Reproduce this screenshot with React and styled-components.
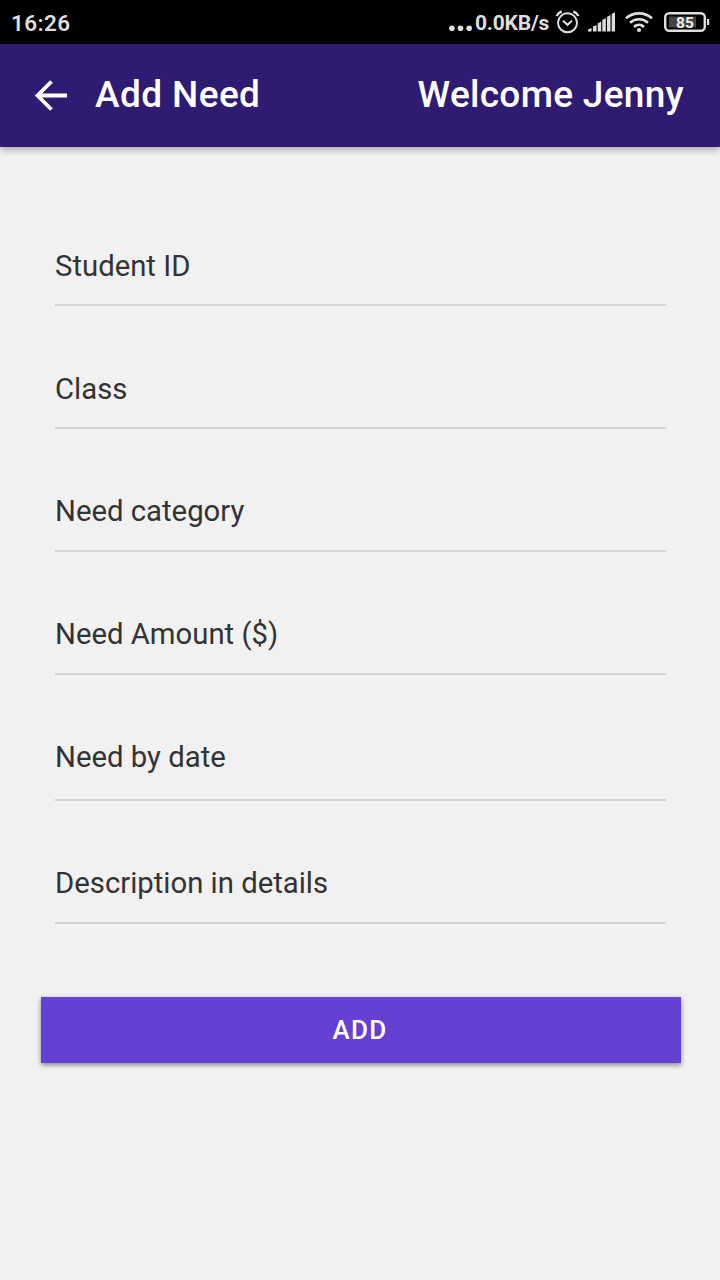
import React from 'react';
import styled, { createGlobalStyle } from 'styled-components';

const GlobalStyle = createGlobalStyle`
  * {
    box-sizing: border-box;
  }
  body {
    margin: 0;
    background: #f1f1f1;
    font-family: Roboto, "Liberation Sans", sans-serif;
  }
`;

const Screen = styled.div`
  width: 720px;
  height: 1280px;
  display: flex;
  flex-direction: column;
  overflow: hidden;
  background: #f1f1f1;
`;

const StatusBar = styled.div`
  height: 44px;
  flex-shrink: 0;
  display: flex;
  justify-content: space-between;
  align-items: center;
  padding: 0 10px 0 11px;
  background: #000;
  color: #dedede;
`;

const Clock = styled.span`
  font-size: 22.5px;
  line-height: 26px;
  font-weight: 600;
  letter-spacing: 0.4px;
  padding-top: 1px;
`;

const StatusIcons = styled.div`
  display: flex;
  align-items: center;
  height: 44px;
`;

const Dots = styled.svg`
  margin-right: 2px;
`;

const Speed = styled.span`
  font-size: 21px;
  line-height: 26px;
  font-weight: 700;
  letter-spacing: -0.2px;
  width: 80px;
  padding-top: 2px;
  white-space: nowrap;
`;

const Spacer = styled.span`
  width: ${(props) => props.$width};
`;

const Header = styled.header`
  height: 103px;
  flex-shrink: 0;
  display: flex;
  align-items: center;
  padding: 0 36px 2px 31px;
  background: #2f1c72;
  color: #fff;
  box-shadow: 0 3px 7px rgba(0, 0, 0, 0.3);
`;

const BackButton = styled.button`
  display: flex;
  border: none;
  padding: 0;
  margin-right: 24px;
  background: none;
  color: inherit;
`;

const Title = styled.h1`
  margin: 0;
  font-size: 37px;
  line-height: 44px;
  font-weight: 500;
  letter-spacing: ${(props) => props.$spacing || '0'};
  white-space: nowrap;
`;

const Welcome = styled(Title).attrs({ as: 'span' })`
  margin-left: auto;
`;

const Form = styled.form`
  display: flex;
  flex-direction: column;
  padding: 36px 39px 0 41px;
`;

const Field = styled.label`
  display: flex;
  align-items: flex-end;
  height: ${(props) => (props.$tall ? '126px' : '123px')};
  margin: 0 15px 0 14px;
  padding-bottom: ${(props) => props.$gap || '20px'};
  border-bottom: 2px solid #d3d3d3;
  color: #333;
  font-size: 29.3px;
  line-height: 38px;
`;

const AddButton = styled.button`
  height: 66px;
  margin-top: 73px;
  padding: 0 2px 0 0;
  border: none;
  background: #6540d3;
  color: #fff;
  font-family: inherit;
  font-size: 26px;
  font-weight: 500;
  letter-spacing: 1.3px;
  box-shadow: 0 2px 5px rgba(0, 0, 0, 0.45);
`;

const fields = [
  { label: 'Student ID', gap: '19px' },
  { label: 'Class', gap: '19px' },
  { label: 'Need category' },
  { label: 'Need Amount ($)' },
  { label: 'Need by date', tall: true, gap: '23px' },
  { label: 'Description in details' },
];

const AlarmIcon = () => (
  <svg width="26" height="44" viewBox="0 0 26 44" fill="none" stroke="#dedede" strokeWidth="2">
    <circle cx="12.5" cy="22.8" r="9.5" />
    <path d="M8 20.8l4.5 4 4.5-4" />
    <path d="M1.5 16c1-2 2.7-3.6 5.2-4.5M23.5 16c-1-2-2.700-3.600-5.200-4.500" strokeWidth="2.4" />
  </svg>
);

const SignalIcon = () => (
  <svg width="28" height="44" viewBox="0 0 28 44" fill="#dedede">
    <path d="M0 31.5v-2l3.500-1.500v3.500z" />
    <path d="M5 31.500v-5l3.500-1.500v6.500z" />
    <path d="M9.700 31.500v-8l3.500-2v10z" />
    <path d="M14.300 31.500v-11.500l3.500-2v13.500z" />
    <path d="M19 31.500v-14.500l3.500-2v16.500z" />
    <path d="M23.700 31.500v-17.500l3.300-1.800v19.300z" />
  </svg>
);

const WifiIcon = () => (
  <svg width="28" height="44" viewBox="0 0 28 44" fill="none" stroke="#dedede" strokeWidth="2.7">
    <path d="M1 18.3c7.500-6.500 18.500-6.500 26 0" />
    <path d="M5 22.8c5.200-4.700 12.800-4.700 18 0" />
    <path d="M9 27c3-2.800 7-2.800 10 0" />
    <circle cx="14" cy="30" r="2.1" fill="#dedede" stroke="none" />
  </svg>
);

const BatteryIcon = () => (
  <svg width="46" height="44" viewBox="0 0 46 44">
    <rect x="1.2" y="13.2" width="39.6" height="17.6" rx="4" fill="none" stroke="#dedede" strokeWidth="2.4" />
    <rect x="5" y="16.5" width="27" height="11" fill="#444" />
    <rect x="43" y="19" width="2.2" height="6" fill="#dedede" />
    <text x="21" y="28" textAnchor="middle" fontSize="15.5" fontWeight="700" fill="#eee">85</text>
  </svg>
);

const BackArrow = () => (
  <svg width="40" height="40" viewBox="0 0 40 40" fill="none" stroke="#fff" strokeWidth="3.8">
    <path d="M36 20.5H6M20.5 6.5l-14 14 14 14" />
  </svg>
);

const TopStatus = () => {
  return (
    <StatusBar>
      <Clock>16:26</Clock>
      <StatusIcons>
        <Dots width="24" height="44" viewBox="0 0 24 44" fill="#dedede">
          <circle cx="2.9" cy="28.3" r="2.8" />
          <circle cx="11.5" cy="28.3" r="2.8" />
          <circle cx="20.2" cy="28.3" r="2.8" />
        </Dots>
        <Speed>0.0KB/s</Speed>
        <AlarmIcon />
        <Spacer $width="7px" />
        <SignalIcon />
        <Spacer $width="9px" />
        <WifiIcon />
        <Spacer $width="11px" />
        <BatteryIcon />
      </StatusIcons>
    </StatusBar>
  );
};

const App = () => {
  return (
    <Screen>
      <GlobalStyle />
      <TopStatus />
      <Header>
        <BackButton type="button" aria-label="Back">
          <BackArrow />
        </BackButton>
        <Title $spacing="0.4px">Add Need</Title>
        <Welcome $spacing="0.3px">Welcome Jenny</Welcome>
      </Header>
      <Form>
        {fields.map((field) => (
          <Field key={field.label} $tall={field.tall} $gap={field.gap}>
            {field.label}
          </Field>
        ))}
        <AddButton type="button">ADD</AddButton>
      </Form>
    </Screen>
  );
};

export default App;
